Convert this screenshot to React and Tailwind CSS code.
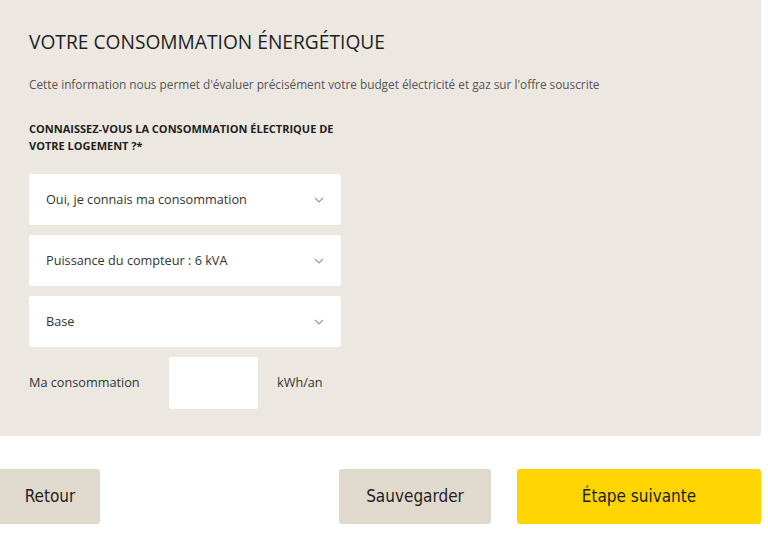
import React from "react";

function Chevron() {
  return (
    <svg width="10" height="6" viewBox="0 0 10 6" className="shrink-0">
      <path d="M1 1 L5 5 L9 1" fill="none" stroke="#9a9a9a" strokeWidth="1.1" />
    </svg>
  );
}

function Select({ label }) {
  return (
    <div className="flex h-[51px] w-[312px] items-center justify-between rounded-[3px] bg-white pl-[17px] pr-[17px] text-[12.7px] text-[#333]">
      <span>{label}</span>
      <Chevron />
    </div>
  );
}

export default function App() {
  return (
    <div className="h-[551px] w-[768px] bg-white" style={{ fontFamily: '"Open Sans", sans-serif' }}>
      <div className="h-[436px] w-[761px] rounded-br-[3px] bg-[#ece8e1] pl-[29px] pt-[29px]">
        <h1 className="text-[19.2px] leading-[26px] text-[#1e1e1e]">VOTRE CONSOMMATION ÉNERGÉTIQUE</h1>
        <p className="mt-[22px] text-[11.8px] leading-[15px] text-[#555]">
          Cette information nous permet d'évaluer précisément votre budget électricité et gaz sur l'offre souscrite
        </p>
        <p className="mt-[28px] w-[330px] text-[11px] font-bold leading-[17px] text-[#1e1e1e]">
          CONNAISSEZ-VOUS LA CONSOMMATION ÉLECTRIQUE DE VOTRE LOGEMENT ?*
        </p>
        <div className="mt-[20px] flex flex-col gap-[10px]">
          <Select label="Oui, je connais ma consommation" />
          <Select label="Puissance du compteur : 6 kVA" />
          <Select label="Base" />
        </div>
        <div className="mt-[10px] flex items-center text-[12.7px] text-[#333]">
          <span className="w-[140px]">Ma consommation</span>
          <div className="h-[52px] w-[89px] rounded-[3px] bg-white" />
          <span className="ml-[19px]">kWh/an</span>
        </div>
      </div>
      <div className="mt-[33px] flex h-[55px] w-[761px] items-stretch" style={{ fontFamily: '"DejaVu Sans Condensed", "DejaVu Sans", sans-serif' }}>
        <button className="flex w-[100px] items-center justify-center rounded-r-[3px] bg-[#e0d9ce] text-[17px] text-[#1e1e1e]">Retour</button>
        <div className="flex-1" />
        <button className="flex w-[152px] items-center justify-center rounded-[3px] bg-[#e0d9ce] text-[17px] text-[#1e1e1e]">Sauvegarder</button>
        <button className="ml-[26px] flex w-[244px] items-center justify-center rounded-[3px] bg-[#fed500] text-[17px] text-[#1e1e1e]">Étape suivante</button>
      </div>
    </div>
  );
}
